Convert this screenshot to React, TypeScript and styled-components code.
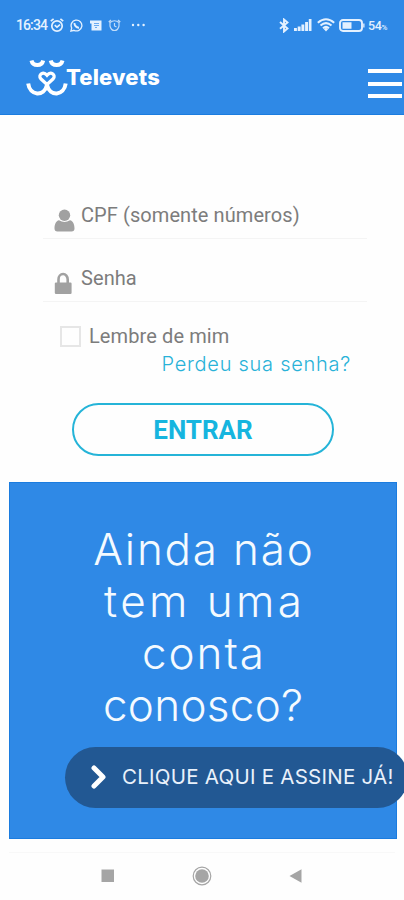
import React from 'react';
import styled, { createGlobalStyle } from 'styled-components';

const GlobalStyle = createGlobalStyle`
  * { box-sizing: border-box; }
  body { margin: 0; background: #fefefe; overflow: hidden; }
  button, input { font: inherit; }
`;

const Screen = styled.div`
  width: 404px;
  height: 900px;
  display: flex;
  flex-direction: column;
  overflow: hidden;
  background: #fefefe;
  font-family: Roboto, sans-serif;
`;

const Top = styled.header`
  height: 115px;
  flex: none;
  background: #2f89e6;
  border-bottom: 1px solid #1b7cdf;
  color: #fff;
`;

const StatusBar = styled.div`
  height: 50px;
  padding: 0 14px 0 16px;
  display: flex;
  justify-content: space-between;
  align-items: center;
`;

const StatusGroup = styled.div`
  display: flex;
  align-items: center;
  height: 20px;
  color: #e4f1ff;
  svg { display: block; flex: none; }
`;

const Clock = styled.span`
  width: 33px;
  font-size: 14px;
  letter-spacing: -0.9px;
  font-weight: 500;
`;

const Percent = styled.span`
  width: 22px;
  font-size: 12.5px;
  font-weight: 500;
  letter-spacing: -0.3px;
  small { font-size: 8px; }
`;

const Brand = styled.div`
  display: flex;
  justify-content: space-between;
  padding: 9px 2px 0 26px;
`;

const Logo = styled.div`
  display: flex;
  align-items: flex-start;
`;

const LogoName = styled.span`
  margin: 4px 0 0 -2px;
  font: 800 22px/28px Inter, sans-serif;
  letter-spacing: 0.15px;
`;

const Burger = styled.button`
  width: 34px;
  height: 29px;
  margin-top: 10px;
  padding: 0;
  border: 0;
  background: none;
  display: flex;
  flex-direction: column;
  justify-content: space-between;
`;

const Bar = styled.span`
  height: 4px;
  background: #fff;
`;

const Form = styled.form`
  height: 367px;
  flex: none;
  padding: 74px 37px 0 43px;
  display: flex;
  flex-direction: column;
`;

const Field = styled.label<{ $height: number }>`
  height: ${p => p.$height}px;
  display: flex;
  align-items: flex-end;
  border-bottom: 1px solid #f4f4f4;
  padding: 0 0 6px 11px;
  svg { display: block; flex: none; }
`;

const FieldText = styled.span`
  margin: 0 0 5px 6px;
  color: #7c7c7c;
  font-size: 20px;
  line-height: 24px;
  letter-spacing: 0.08px;
`;

const Remember = styled.label`
  display: flex;
  align-items: center;
  height: 24px;
  margin: 22px 0 0 17px;
  font-size: 20px;
  letter-spacing: 0.1px;
  color: #7c7c7c;
`;

const Check = styled.span`
  width: 21px;
  height: 21px;
  margin-right: 8px;
  border: 2px solid #e6e6e6;
`;

const Forgot = styled.a`
  align-self: flex-end;
  margin: 4px 16px 0 0;
  font: 300 20px/24px Inter, sans-serif;
  letter-spacing: 0.73px;
  white-space: nowrap;
  color: #29b2d8;
`;

const Enter = styled.button`
  width: 262px;
  height: 53px;
  margin: 27px 0 0 29px;
  flex: none;
  border: 2px solid #25b4d8;
  border-radius: 27px;
  background: transparent;
  color: #16b5df;
  font-size: 26px;
  font-weight: 700;
  line-height: 48px;
  padding: 0;
`;

const Card = styled.section`
  width: 388px;
  height: 357px;
  margin-left: 9px;
  flex: none;
  padding-top: 40px;
  background: #2f89e6;
  border: 1px solid #1b7cdf;
`;

const Title = styled.h1`
  margin: 0;
  text-align: center;
  font: 300 44px/52px Inter, sans-serif;
  color: #f4faff;
`;

const Line = styled.span<{ $track: number }>`
  display: block;
  letter-spacing: ${p => p.$track}px;
  margin-right: ${p => -p.$track}px;
`;

const Cta = styled.a`
  width: 343px;
  height: 61px;
  margin: 16px 0 0 55px;
  padding: 0 0 2px 26px;
  display: flex;
  align-items: center;
  border-radius: 31px;
  background: #225893;
  color: #e9f1fb;
  font: 400 20.5px/24px Inter, sans-serif;
  letter-spacing: 0.25px;
  white-space: nowrap;
  svg { display: block; flex: none; margin-right: 15px; }
`;

const NavBar = styled.nav`
  height: 52px;
  margin: 13px 9px 0;
  padding: 0 7px 1px 6px;
  display: flex;
  justify-content: center;
  align-items: center;
  gap: 77px;
  border-top: 1px solid #f8f8f8;
  svg { display: block; }
`;

const lines: [string, number][] = [
  ['Ainda não', 1.8],
  ['tem uma', 3.4],
  ['conta', 1.9],
  ['conosco?', 0.3],
];

const AlarmIcon = () => (
  <svg width="14" height="15" viewBox="0 0 14 15" fill="none" stroke="currentColor" strokeWidth="1.7">
    <circle cx="7" cy="8" r="5.2" />
    <path d="M.8 3.2 3.6.9M13.2 3.2 10.4.9M4.7 7.2 7 9.2l3-2.5" />
  </svg>
);

const ChatIcon = () => (
  <svg width="13" height="13" viewBox="0 0 13 13" fill="none" stroke="currentColor">
    <path d="M.9 12.1 1.7 9A5.4 5.4 0 1 1 4 11.3Z" strokeWidth="1.3" />
    <path d="M4.500 4C4.200 6.300 6.500 8.900 9 8.700" strokeWidth="2" />
  </svg>
);

const NoteIcon = () => (
  <svg width="12" height="11" viewBox="0 0 12 11">
    <path d="M0 .5h11.500V10.500H1.500V3.500H0Z" fill="currentColor" />
    <path d="M4 3.500h5M4 5.500h5M5 7.500h2" stroke="#6aaaf0" />
  </svg>
);

const SmallAlarmIcon = () => (
  <svg width="13" height="13" viewBox="0 0 13 13" fill="none" stroke="currentColor" opacity=".8">
    <path d="M2 3.500Q6.500 0 11 3.500V7Q10 11.500 6.500 11.500T2 7ZM.7 3 3 1M12.300 3 10 1M6.500 4v3l2 1" strokeWidth="1.2" />
  </svg>
);

const DotsIcon = () => (
  <svg width="15" height="4" viewBox="0 0 15 4" fill="currentColor">
    <circle cx="2" cy="2" r="1.200" /><circle cx="7.300" cy="2" r="1.200" /><circle cx="12.600" cy="2" r="1.200" />
  </svg>
);

const BluetoothIcon = () => (
  <svg width="10" height="15" viewBox="0 0 10 15" fill="none" stroke="currentColor" strokeWidth="1.900">
    <path d="m1 4 7.500 6.500L5 13.500V1.500l3.500 3L1 10.800" />
  </svg>
);

const SignalIcon = () => (
  <svg width="18" height="12" viewBox="0 0 18 12" fill="currentColor">
    <path d="M0 9h2.900v3H0zM3.700 7.500h2.900V12H3.700zM7.400 5.500h2.900V12H7.400zM11.100 3h2.900v9h-2.900zM14.800 0h2.700v12h-2.700z" />
  </svg>
);

const WifiIcon = () => (
  <svg width="18" height="14" viewBox="0 0 18 14" fill="none" stroke="currentColor" strokeWidth="2">
    <path d="M.8 4.700Q9-2.300 17.200 4.700M3.500 7.500Q9 2.800 14.500 7.500M6 10.200Q9 7.500 12 10.200" />
    <path d="m9 13.500-2.300-2.400Q9 9 11.300 11.100Z" fill="currentColor" stroke="none" />
  </svg>
);

const BatteryIcon = () => (
  <svg width="26" height="13" viewBox="0 0 26 13">
    <rect x="1" y="1" width="22" height="11" rx="3" fill="none" stroke="currentColor" strokeWidth="1.900" />
    <path d="M3.500 3.300h9v6.400h-9zM24.200 4.500h1.300v4h-1.300z" fill="currentColor" />
  </svg>
);

const TelevetsMark = () => (
  <svg width="42" height="38" viewBox="0 0 42 38" fill="none" stroke="#fff" strokeWidth="4">
    <path d="M5.500 1.500c1.300 6 10.300 6 11.700 0M24.700 1.500c1.400 6 10.400 6 11.800 0" />
    <path d="M2.200 24.500C3.800 37 18 38 21 26 24 38 38 37 39.700 24.500" />
    <path d="M21 25.500 14.800 19.800C11.500 15.800 17.300 11.700 21 16.300 24.700 11.700 30.500 15.800 27.200 19.800Z" strokeWidth="3.200" />
  </svg>
);

const UserIcon = () => (
  <svg width="21" height="23" viewBox="0 0 21 23" fill="#a1a1a1">
    <circle cx="10.500" cy="6.300" r="5.700" />
    <path d="M5 11.300q5.500 3.500 11 0c3 .5 4.500 4 4.500 8.200 0 2-1 3-3 3h-14c-2 0-3-1-3-3 0-4.200 1.500-7.700 4.500-8.200Z" />
  </svg>
);

const LockIcon = () => (
  <svg width="21" height="23" viewBox="0 0 21 23">
    <path d="M4.500 12V7.500a4.600 5.500 0 0 1 9.200 0V12" fill="none" stroke="#a1a1a1" strokeWidth="2.600" />
    <rect x=".8" y="10.500" width="16.800" height="11.500" rx="1.200" fill="#a1a1a1" />
  </svg>
);

const ChevronIcon = () => (
  <svg width="16" height="24" viewBox="0 0 16 24" fill="none" stroke="#fff" strokeWidth="5">
    <path d="m3 3 9 9-9 9" strokeLinejoin="round" strokeLinecap="round" />
  </svg>
);

const Gap = styled.span<{ $w: number }>`
  width: ${p => p.$w}px;
`;

export default function App() {
  return (
    <Screen>
      <GlobalStyle />
      <Top>
        <StatusBar>
          <StatusGroup>
            <Clock>16:34</Clock>
            <Gap $w={1} /><AlarmIcon />
            <Gap $w={6} /><ChatIcon />
            <Gap $w={7} /><NoteIcon />
            <Gap $w={6} /><SmallAlarmIcon />
            <Gap $w={10} /><DotsIcon />
          </StatusGroup>
          <StatusGroup>
            <BluetoothIcon />
            <Gap $w={5} /><SignalIcon />
            <Gap $w={5} /><WifiIcon />
            <Gap $w={4} /><BatteryIcon />
            <Gap $w={3} /><Percent>54<small>%</small></Percent>
          </StatusGroup>
        </StatusBar>
        <Brand>
          <Logo>
            <TelevetsMark />
            <LogoName>Televets</LogoName>
          </Logo>
          <Burger type="button" aria-label="Menu"><Bar /><Bar /><Bar /></Burger>
        </Brand>
      </Top>
      <Form>
        <Field $height={50}><UserIcon /><FieldText>CPF (somente números)</FieldText></Field>
        <Field $height={63}><LockIcon /><FieldText>Senha</FieldText></Field>
        <Remember><Check />Lembre de mim</Remember>
        <Forgot>Perdeu sua senha?</Forgot>
        <Enter type="button">ENTRAR</Enter>
      </Form>
      <Card>
        <Title>
          {lines.map(([text, track]) => <Line key={text} $track={track}>{text}</Line>)}
        </Title>
        <Cta><ChevronIcon />CLIQUE AQUI E ASSINE JÁ!</Cta>
      </Card>
      <NavBar>
        <svg width="14" height="14"><rect x=".5" y=".5" width="12.500" height="12.500" fill="#a5a5a5" /></svg>
        <svg width="20" height="20" fill="#a5a5a5">
          <circle cx="10" cy="10" r="6.800" />
          <circle cx="10" cy="10" r="8.800" fill="none" stroke="#a5a5a5" strokeWidth="1.200" />
        </svg>
        <svg width="13" height="14"><path d="M.5 7 12.500.3v13.400Z" fill="#a5a5a5" /></svg>
      </NavBar>
    </Screen>
  );
}
